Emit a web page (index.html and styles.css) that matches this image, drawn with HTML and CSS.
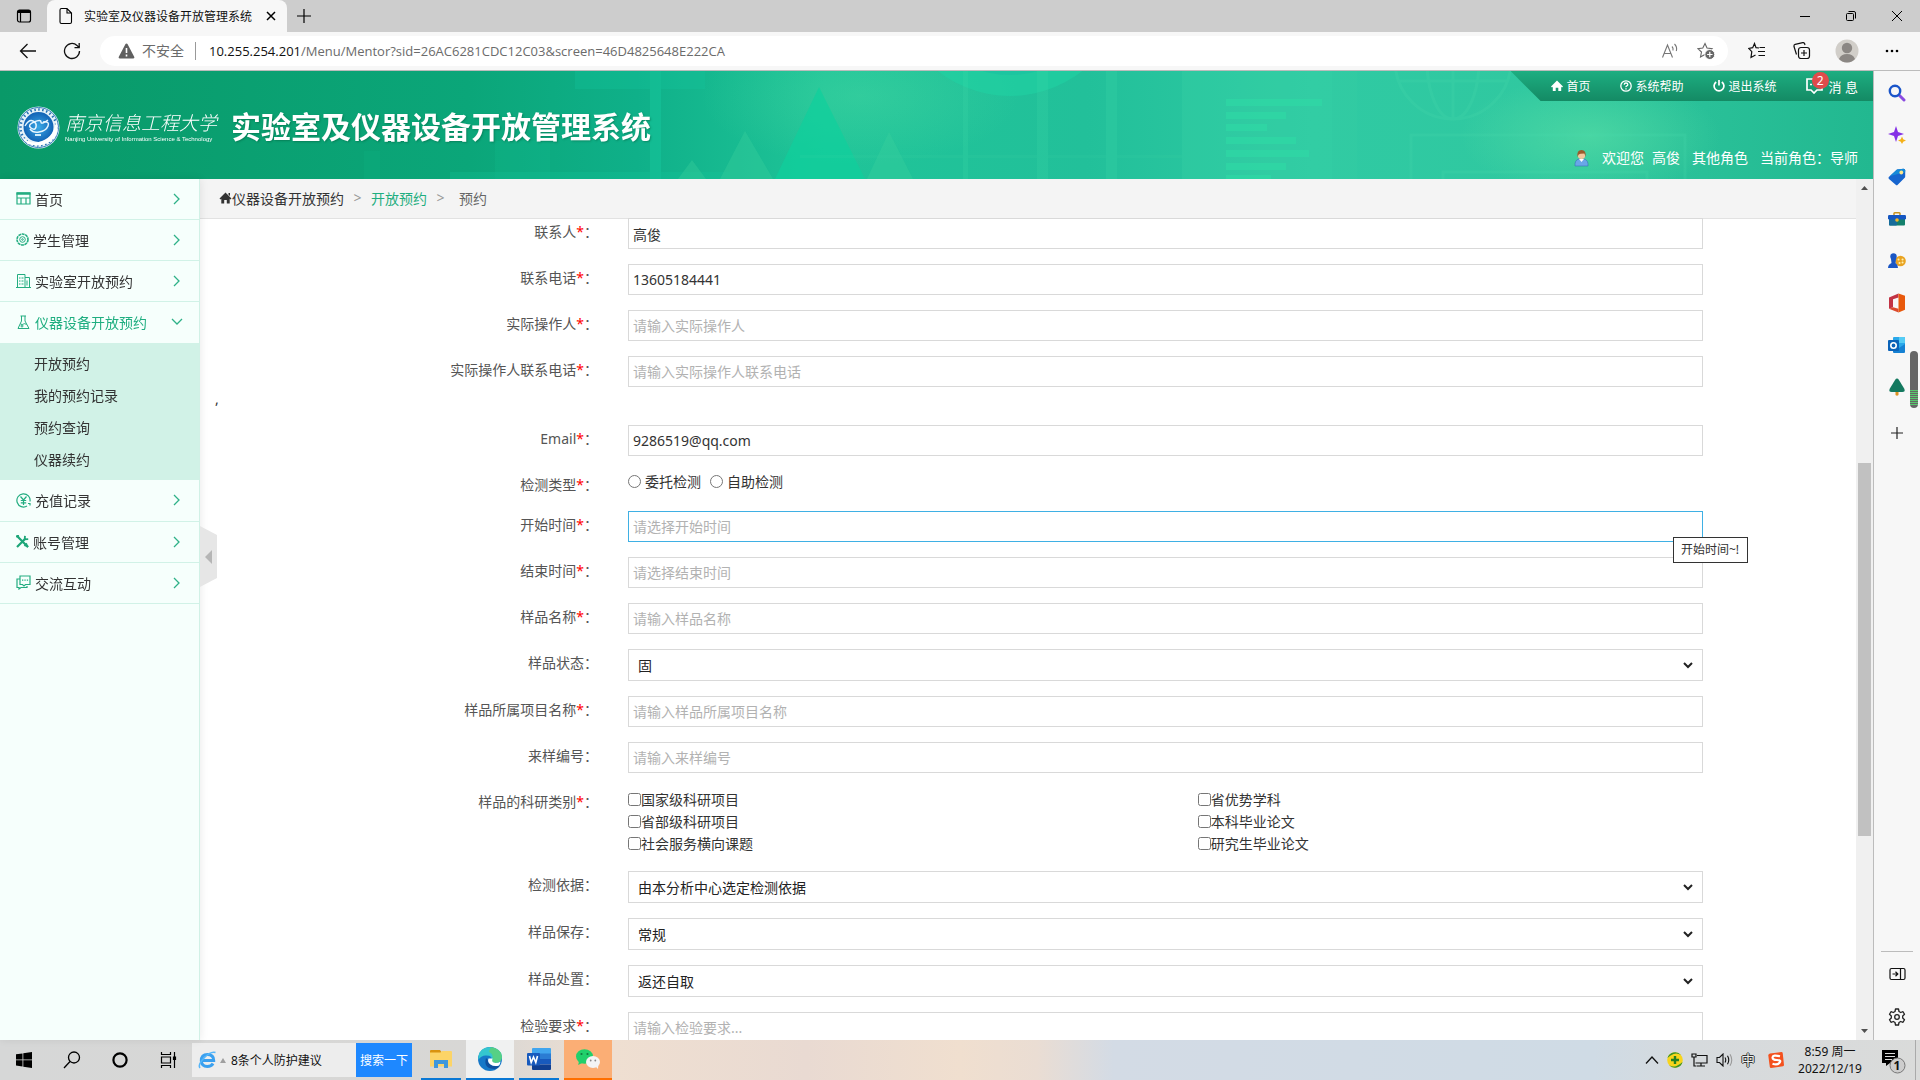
FILE: index.html
```
<!DOCTYPE html>
<html lang="zh-CN">
<head>
    <meta charset="UTF-8">
    <meta name="viewport" content="width=device-width, initial-scale=1.0">
    <title>实验室及仪器设备开放管理系统</title>
    <link rel="stylesheet" href="styles.css">
</head>
<body>
    <!-- Tabs -->
    <div class="tabs">
        <button class="tab-actions" aria-label="标签页操作">
            <svg width="16" height="16" viewBox="0 0 16 16"><rect x="1.5" y="2" width="13" height="12" rx="2" fill="none" stroke="#000" stroke-width="1.2"/><path d="M1.5 5V3.500q0-1.500 1.500-1.500h10q1.500 0 1.500 1.500V5z"/><path d="M4.500 5v9" stroke="#000" stroke-width="1.2"/></svg>
        </button>
        <div class="tab">
            <svg width="14" height="18" viewBox="0 0 14 18"><path d="M2.500 1.500h5.500l4.500 4.500v9q0 1.500-1.500 1.500h-8.500q-1.500 0-1.500-1.500v-12q0-1.500 1.500-1.500zM8 1.500v4.500h4.500" fill="none" stroke="#000" stroke-width="1.1"/></svg>
            <span class="tab-title">实验室及仪器设备开放管理系统</span>
            <button aria-label="关闭标签页"><svg width="10" height="10" viewBox="0 0 10 10"><path d="M1 1l8 8M9 1l-8 8" stroke="#000" stroke-width="1.5"/></svg></button>
        </div>
        <button class="new-tab" aria-label="新建标签页"><svg width="14" height="14" viewBox="0 0 14 14"><path d="M7 0v14M0 7h14" stroke="#000" stroke-width="1.2"/></svg></button>
        <div class="window-buttons">
            <button aria-label="最小化"><svg width="10" height="10" viewBox="0 0 10 10"><path d="M0 5.500h10" stroke="#000"/></svg></button>
            <button aria-label="还原"><svg width="10" height="10" viewBox="0 0 10 10"><rect x=".5" y="2.500" width="7" height="7" rx="1" fill="none" stroke="#000"/><path d="M2.500.5h5.500q1.500 0 1.500 1.500v5.500" fill="none" stroke="#000"/></svg></button>
            <button aria-label="关闭"><svg width="10" height="10" viewBox="0 0 10 10"><path d="M0 0l10 10M10 0L0 10" stroke="#000"/></svg></button>
        </div>
    </div>

    <!-- Toolbar -->
    <div class="toolbar">
        <button class="nav-button" aria-label="返回"><svg width="18" height="16" viewBox="0 0 18 16"><path d="M8.500 1L1.500 8l7 7M1.500 8h15.500" fill="none" stroke="#111" stroke-width="1.3"/></svg></button>
        <button class="nav-button" aria-label="刷新"><svg width="18" height="18" viewBox="0 0 18 18"><path d="M16.500 9a7.500 7.500 0 1 1-2.500-5.600L16 5.500M16.200 1v4.700h-4.700" fill="none" stroke="#111" stroke-width="1.3"/></svg></button>
        <div class="address">
            <svg width="17" height="16" viewBox="0 0 17 16"><path d="M8.500.5q.7 0 1 .6l6.800 13q.5 1.400-1 1.400H1.700q-1.500 0-1-1.400l6.800-13q.3-.6 1-.6z" fill="#5f5f5f"/><path d="M8.500 5v5M8.500 11.500v2" stroke="#fff" stroke-width="1.600"/></svg>
            <span class="insecure">不安全</span>
            <span class="url"><b>10.255.254.201</b>/Menu/Mentor?sid=26AC6281CDC12C03&amp;screen=46D4825648E222CA</span>
            <button aria-label="大声朗读"><svg width="18" height="16" viewBox="0 0 18 16" fill="none" stroke="#767676" stroke-width="1.1"><path d="M1.500 14.500L6.500 2l5 12.500M3.200 10.500h6.500M11 3.500q1.500 1.500 1 4M13.500 1q3 3 1.800 7"/></svg></button>
            <button aria-label="添加到收藏夹"><svg width="18" height="18" viewBox="0 0 18 18"><path d="M8 1.500l2 4.500 5 .6-3.700 3.400 1 5L8 12.500 3.500 15l1-5L.8 6.600l5-.6z" fill="none" stroke="#666" stroke-width="1.1"/><circle cx="12.800" cy="12.500" r="5" fill="#666" stroke="#fff"/><path d="M12.800 9.800v5.400M10.100 12.500h5.400" stroke="#fff" stroke-width="1.2"/></svg></button>
        </div>
        <button class="tool" aria-label="收藏夹"><svg width="18" height="18" viewBox="0 0 18 18"><path d="M11 6L8 5.700 6.500 1.500 4.700 5.700.8 6.500l3 3.200L3 15.500l4.500-2.500M11.500 5.500h5.500M10 9.500h7M10.500 13.500h6.500" fill="none" stroke="#111" stroke-width="1.200"/></svg></button>
        <button class="tool" aria-label="集锦"><svg width="18" height="18" viewBox="0 0 18 18" fill="none" stroke="#111" stroke-width="1.2"><rect x="5.500" y="5.500" width="11" height="11" rx="2.500"/><path d="M11 8v6M8 11h6M3.500 12.500L1 4.500q-.3-1.700 1.200-2.200l7.500-1.700q1.500-.2 2 1.200l.3 1.200"/></svg></button>
        <button class="tool" aria-label="个人资料"><svg width="24" height="24" viewBox="0 0 24 24"><circle cx="12" cy="12" r="11.500" fill="#d1cec9"/><circle cx="12" cy="9" r="5.200" fill="#8b8784"/><path d="M4 20q2-5 8-5t8 5q-3.500 3.500-8 3.500T4 20z" fill="#8b8784"/></svg></button>
        <button class="tool" aria-label="设置及其他"><svg width="14" height="4" viewBox="0 0 14 4"><circle cx="2" cy="2" r="1.300"/><circle cx="7" cy="2" r="1.300"/><circle cx="12" cy="2" r="1.300"/></svg></button>
    </div>

    <div class="window">
        <div class="page">
            <header class="header">
                <svg class="header-art" viewBox="0 0 1873 108" preserveAspectRatio="none">
                    <defs>
                        <radialGradient id="glow"><stop offset="0" stop-color="#5be0a6" stop-opacity=".6"/><stop offset="1" stop-color="#5be0a6" stop-opacity="0"/></radialGradient>
                    </defs>
                    <ellipse cx="1590" cy="65" rx="130" ry="60" fill="url(#glow)"/>
                    <ellipse cx="860" cy="25" rx="160" ry="70" fill="url(#glow)" opacity=".5"/>
                    <g fill="#16c79d" opacity=".5">
                        <rect x="575" y="0" width="130" height="18" opacity=".6"/>
                        <rect x="650" y="0" width="11" height="108"/>
                        <rect x="495" y="70" width="55" height="38" opacity=".3"/>
                        <rect x="450" y="101" width="280" height="7" opacity=".5"/>
                        <rect x="364" y="80" width="16" height="28" opacity=".2"/>
                    </g>
                    <path d="M678 108l14-19 14 19zM720 108l25-48 28 48zM867 108l22-47 24 47z" fill="#3bd29e" opacity=".35"/>
                    <path d="M775 108l44-92 46 92z" fill="#0ed09c" opacity=".7"/>
                    <circle cx="1010" cy="-92" r="117" fill="#1fd2a3" opacity=".6"/>
                    <circle cx="1010" cy="-92" r="96" fill="#1bc2a0" opacity=".6"/>
                    <g fill="#43dca9" opacity=".2">
                        <rect x="963" y="0" width="5" height="108"/>
                        <rect x="1037" y="0" width="11" height="108"/>
                        <rect x="1106" y="0" width="11" height="108"/>
                        <rect x="1182" y="0" width="150" height="108"/>
                        <rect x="1253" y="0" width="8" height="108"/>
                        <rect x="1332" y="0" width="25" height="108" opacity=".6"/>
                        <rect x="800" y="84" width="430" height="3" opacity=".6"/>
                    </g>
                    <g fill="#2fdda5" opacity=".5">
                        <rect x="1226" y="28" width="96" height="7"/>
                        <rect x="1226" y="41" width="60" height="7"/>
                        <rect x="1226" y="53" width="41" height="7"/>
                        <rect x="1226" y="66" width="70" height="7"/>
                        <rect x="1226" y="79" width="83" height="7"/>
                        <rect x="1226" y="92" width="60" height="7"/>
                        <rect x="1226" y="104" width="45" height="4"/>
                    </g>
                    <g fill="none" stroke="#4bdcae" stroke-width="3" opacity=".2">
                        <circle cx="1453" cy="-10" r="58"/>
                        <ellipse cx="1453" cy="-10" rx="26" ry="58"/>
                        <path d="M1453 0v48M1398 10h110M1411 108V64h274v44M1443 108v-7h204v7"/>
                    </g>
                </svg>
                <div class="brand">
                    <svg width="43" height="43" viewBox="0 0 43 43">
                        <defs><radialGradient id="globe"><stop offset="0" stop-color="#3aa9e6"/><stop offset="1" stop-color="#1263b5"/></radialGradient></defs>
                        <circle cx="21.500" cy="21.500" r="21" fill="#e6f2f8"/>
                        <circle cx="21.500" cy="21.500" r="18" fill="none" stroke="#2572b3" stroke-width="2.500" stroke-dasharray="1.500 2.500"/>
                        <circle cx="21.500" cy="21.500" r="20" fill="none" stroke="#3d81bb"/>
                        <circle cx="21.500" cy="21" r="15" fill="url(#globe)"/>
                        <path d="M4 29q8 11 21 6t14-21q5 14-5 21T11 38q-5-4-7-9z" fill="#fff"/>
                        <path d="M8 20q4-7 8-5t3 6-5 1 3-6 7 0 7-2M26 16q7-1 5 4t-9 6q-6 1-9-3" fill="none" stroke="#e7f6ff" stroke-width="1.500"/>
                        <path d="M18 29h6" stroke="#cfeaf8" stroke-width="2"/>
                    </svg>
                    <div class="school">
                        <span class="school-name">南京信息工程大学</span>
                        <span class="school-en">Nanjing University of Information Science &amp; Technology</span>
                    </div>
                    <h1>实验室及仪器设备开放管理系统</h1>
                </div>
                <div class="header-right">
                    <nav class="top-links">
                        <a href="#"><svg width="12" height="12" viewBox="0 0 12 12" fill="#fff"><path d="M6 .5l6 6-1 .9-.8-.7V11H7.300V7.800H4.700V11H1.800V6.700l-.8.7-1-.9z"/></svg>首页</a>
                        <a href="#"><svg width="12" height="12" viewBox="0 0 12 12" fill="none" stroke="#fff"><circle cx="6" cy="6" r="5.200" stroke-width="1.300"/><path d="M4.200 4.700q.1-1.700 1.800-1.700t1.800 1.500q0 .9-1 1.300t-.8 1.400M6 8.200v1.300" stroke-width="1.300"/></svg>系统帮助</a>
                        <a href="#"><svg width="12" height="12" viewBox="0 0 12 12" fill="none" stroke="#fff" stroke-width="1.700"><path d="M3.200 2a4.900 4.900 0 1 0 5.600 0M6 0v5.500"/></svg>退出系统</a>
                        <a href="#" class="message"><svg width="17" height="16" viewBox="0 0 17 16" fill="none" stroke="#fff" stroke-width="1.700"><path d="M12 1H1v11h4l3 3 3-3h5V8"/><path d="M4 6.500h2M7.500 6.500h2"/></svg><span class="badge">2</span>消 息</a>
                    </nav>
                    <div class="user">
                        <svg width="15" height="17" viewBox="0 0 15 17"><path d="M1 16q-.5-6 4-7h5q4.500 1 4 7z" fill="#69a6e8" stroke="#3571b8" stroke-width=".6"/><path d="M5 9l2.500 3L10 9z" fill="#fff"/><circle cx="7.500" cy="5.500" r="3.600" fill="#f6c79d"/><path d="M3.500 7Q2.500 0 7.500 0T11.500 7l-1-3.500-4 .3-1.800.7z" fill="#9a5b2c"/></svg>
                        <span>欢迎您</span>
                        <span>高俊</span>
                        <a href="#">其他角色</a>
                        <span>当前角色：导师</span>
                    </div>
                </div>
            </header>

            <div class="body">
                <nav class="menu">
                    <a href="#" class="menu-item"><svg width="15" height="15" viewBox="0 0 15 15" fill="none" stroke="#23ad80" stroke-width="1.200"><path d="M1 2h13v11H1zM1 7h13M5 7v6M10 7v6"/><path d="M.5 2.500h14" stroke-width="2.500"/></svg><span>首页</span><svg class="chevron" width="8" height="12" viewBox="0 0 8 12"><path d="M1 1l5 5-5 5"/></svg></a>
                    <a href="#" class="menu-item"><svg width="13" height="13" viewBox="0 0 13 13" fill="none" stroke="#23ad80"><circle cx="6.500" cy="6.500" r="5.500" stroke-width="1.600" stroke-dasharray="2.900 .6"/><circle cx="6.500" cy="6.500" r="2.800"/><circle cx="6.500" cy="6.500" r=".8"/></svg><span>学生管理</span><svg class="chevron" width="8" height="12" viewBox="0 0 8 12"><path d="M1 1l5 5-5 5"/></svg></a>
                    <a href="#" class="menu-item"><svg width="15" height="15" viewBox="0 0 15 15" fill="none" stroke="#23ad80"><path d="M1.500 14V1.500h7.500V14M9 4.500h4.500V14M0 14.500h15M3 5h1.500M5.500 5h2M3 8h1.500M5.500 8h2M3 11h1.500M5.500 11h2M11 7.500v5"/></svg><span>实验室开放预约</span><svg class="chevron" width="8" height="12" viewBox="0 0 8 12"><path d="M1 1l5 5-5 5"/></svg></a>
                    <a href="#" class="menu-item active"><svg width="15" height="15" viewBox="0 0 15 15" fill="none" stroke="#23ad80"><path d="M4.500 1h5.500M5.500 1v5L2 13.500h11L9 6V1M4.500 9q2 1 3 0t3 .5"/><circle cx="6" cy="11" r="1"/></svg><span>仪器设备开放预约</span><svg class="chevron" width="12" height="8" viewBox="0 0 12 8"><path d="M1 1l5 5 5-5"/></svg></a>
                    <div class="submenu">
                        <a href="#">开放预约</a>
                        <a href="#">我的预约记录</a>
                        <a href="#">预约查询</a>
                        <a href="#">仪器续约</a>
                    </div>
                    <a href="#" class="menu-item"><svg width="15" height="15" viewBox="0 0 15 15" fill="none" stroke="#23ad80" stroke-width="1.200"><path d="M14 8.500A6.600 6.600 0 1 0 11 13M4.500 3.500L7.500 7l3-3.500M7.500 7v5M4.800 7.500h5.400M4.800 9.800h5.400M12 10.500h2v2"/></svg><span>充值记录</span><svg class="chevron" width="8" height="12" viewBox="0 0 8 12"><path d="M1 1l5 5-5 5"/></svg></a>
                    <a href="#" class="menu-item"><svg width="13" height="13" viewBox="0 0 13 13" fill="none" stroke="#1da678" stroke-width="2.200"><path d="M1 1l11 11M1 12l8.500-8.500"/><path d="M9 .8L8.700 4.300l3.500-.2M9.500 9.500l2.500 2.500" stroke-width="1.800"/><path d="M0 1.500l3-1M8.500 11l2.500-2.500" stroke-width="2"/></svg><span>账号管理</span><svg class="chevron" width="8" height="12" viewBox="0 0 8 12"><path d="M1 1l5 5-5 5"/></svg></a>
                    <a href="#" class="menu-item"><svg width="15" height="15" viewBox="0 0 15 15" fill="none" stroke="#23ad80" stroke-width="1.200"><path d="M4 1h10v8.500H9.500L8 11 6.500 9.500H4zM4 4H1v8.500h2V14l2-1.500h6V11"/><path d="M6 5.200h1.300M8.400 5.200h1.300M10.800 5.200h1.300"/></svg><span>交流互动</span><svg class="chevron" width="8" height="12" viewBox="0 0 8 12"><path d="M1 1l5 5-5 5"/></svg></a>
                    <button class="collapse" aria-label="收起菜单"><svg width="7" height="14" viewBox="0 0 7 14"><path d="M7 0v14L0 7z" fill="#b5b5b5"/></svg></button>
                </nav>

                <main class="main">
                    <div class="breadcrumb">
                        <a href="#"><svg width="13" height="12" viewBox="0 0 12 12" fill="#333"><path d="M6 .5l6 6-1 .9-.8-.7V11.500H7.300V8H4.700v3.500H1.800V6.700l-.8.7-1-.9zM9 1h1.500v3L9 2.700z"/></svg>仪器设备开放预约</a>
                        <i>&gt;</i>
                        <a href="#" class="current">开放预约</a>
                        <i>&gt;</i>
                        <span>预约</span>
                    </div>

                    <form class="form">
                        <div class="row">
                            <label for="contact">联系人<em>*</em>：</label>
                            <input type="text" id="contact" value="高俊">
                        </div>
                        <div class="row">
                            <label for="phone">联系电话<em>*</em>：</label>
                            <input type="text" id="phone" value="13605184441">
                        </div>
                        <div class="row">
                            <label for="operator">实际操作人<em>*</em>：</label>
                            <input type="text" id="operator" placeholder="请输入实际操作人">
                        </div>
                        <div class="row last">
                            <label for="operatorPhone">实际操作人联系电话<em>*</em>：</label>
                            <input type="text" id="operatorPhone" placeholder="请输入实际操作人联系电话">
                        </div>
                        <div class="stray">,</div>
                        <div class="row">
                            <label for="email">Email<em>*</em>：</label>
                            <input type="text" id="email" value="9286519@qq.com">
                        </div>
                        <div class="row kind">
                            <span class="label">检测类型<em>*</em>：</span>
                            <div class="radios">
                                <input type="radio" name="kind" id="kind1"><label for="kind1">委托检测</label>
                                <input type="radio" name="kind" id="kind2"><label for="kind2">自助检测</label>
                            </div>
                        </div>
                        <div class="row">
                            <label for="start">开始时间<em>*</em>：</label>
                            <input type="text" id="start" class="focused" placeholder="请选择开始时间">
                            <div class="tooltip">开始时间~!</div>
                        </div>
                        <div class="row">
                            <label for="end">结束时间<em>*</em>：</label>
                            <input type="text" id="end" placeholder="请选择结束时间">
                        </div>
                        <div class="row">
                            <label for="sample">样品名称<em>*</em>：</label>
                            <input type="text" id="sample" placeholder="请输入样品名称">
                        </div>
                        <div class="row">
                            <label for="state">样品状态：</label>
                            <select id="state"><option>固</option></select>
                        </div>
                        <div class="row">
                            <label for="project">样品所属项目名称<em>*</em>：</label>
                            <input type="text" id="project" placeholder="请输入样品所属项目名称">
                        </div>
                        <div class="row">
                            <label for="number">来样编号：</label>
                            <input type="text" id="number" placeholder="请输入来样编号">
                        </div>
                        <div class="row">
                            <span class="label">样品的科研类别<em>*</em>：</span>
                            <div class="checks">
                                <div><input type="checkbox" id="c1"><label for="c1">国家级科研项目</label></div>
                                <div><input type="checkbox" id="c2"><label for="c2">省优势学科</label></div>
                                <div><input type="checkbox" id="c3"><label for="c3">省部级科研项目</label></div>
                                <div><input type="checkbox" id="c4"><label for="c4">本科毕业论文</label></div>
                                <div><input type="checkbox" id="c5"><label for="c5">社会服务横向课题</label></div>
                                <div><input type="checkbox" id="c6"><label for="c6">研究生毕业论文</label></div>
                            </div>
                        </div>
                        <div class="row">
                            <label for="basis">检测依据：</label>
                            <select id="basis"><option>由本分析中心选定检测依据</option></select>
                        </div>
                        <div class="row">
                            <label for="storage">样品保存：</label>
                            <select id="storage"><option>常规</option></select>
                        </div>
                        <div class="row">
                            <label for="disposal">样品处置：</label>
                            <select id="disposal"><option>返还自取</option></select>
                        </div>
                        <div class="row">
                            <label for="request">检验要求<em>*</em>：</label>
                            <textarea id="request" rows="4" placeholder="请输入检验要求..."></textarea>
                        </div>
                    </form>
                </main>

                <div class="scrollbar">
                    <svg width="7" height="4" viewBox="0 0 7 4"><path d="M0 4l3.500-4L7 4z" fill="#505050"/></svg>
                    <div class="track"><div class="thumb"></div></div>
                    <svg width="7" height="4" viewBox="0 0 7 4"><path d="M0 0l3.500 4L7 0z" fill="#505050"/></svg>
                </div>
            </div>
        </div>

        <!-- Edge side bar -->
        <aside class="edge">
            <button aria-label="搜索"><svg width="18" height="18" viewBox="0 0 18 18" fill="none"><path d="M11 11l5 5" stroke="#8a4be0" stroke-width="3" stroke-linecap="round"/><circle cx="7" cy="7" r="5.200" stroke="#1a55c9" stroke-width="2.400"/></svg></button>
            <button aria-label="发现"><svg width="18" height="18" viewBox="0 0 18 18"><path d="M8 0l2 6 6 2-6 2-2 6-2-6-6-2 6-2z" fill="#8430e6"/><path d="M14 10.500l1.200 2.800L18 14.500l-2.800 1.200L14 18l-1.200-2.300L10 14.500l2.800-1.200z" fill="#f5b117"/></svg></button>
            <button aria-label="购物"><svg width="18" height="18" viewBox="0 0 18 18"><path d="M9 1.500l6.500-.8q1.700 0 1.700 1.600v6.200q0 .7-.5 1.200l-7 7q-1 1-2 0L1 11q-1-1-.2-2z" fill="#1765ce"/><path d="M9 1.500l6.500-.8q1.700 0 1.700 1.600v2L2 8z" fill="#1689d8"/><circle cx="13.300" cy="4.500" r="1.900" fill="#fde68a"/></svg></button>
            <button aria-label="工具"><svg width="18" height="18" viewBox="0 0 18 18"><path d="M6 6V3.500q0-.8.8-.8h4.400q.8 0 .8.800V6" fill="none" stroke="#c79220" stroke-width="1.500"/><rect x="1" y="8" width="16" height="7.500" rx="1" fill="#14806c"/><rect x="1" y="8" width="8" height="7.500" rx="1" fill="#176c9b"/><rect x="0" y="5" width="18" height="4.500" rx="1.200" fill="#1556c2"/><circle cx="9" cy="10" r="1.800" fill="#f5b829"/></svg></button>
            <button aria-label="游戏"><svg width="18" height="18" viewBox="0 0 18 18"><circle cx="12.500" cy="9" r="5.300" fill="#e9a322"/><path d="M10.500 7.500h.1M14.500 7.500h.1M11.500 11h.1M14.500 10.500h.1" stroke="#fff1b0" stroke-width="2" stroke-linecap="round"/><circle cx="5.500" cy="4.500" r="3.200" fill="#1a56c4"/><path d="M3 7h5l-.5 4q2.500 1.500 2.500 5H0q0-3.500 3.500-5z" fill="#1a56c4"/></svg></button>
            <button aria-label="Office"><svg width="18" height="20" viewBox="0 0 18 20"><path d="M1 4.500L10.500.5v4L5 6.200v8l-4 1.600z" fill="#c23344"/><path d="M10.500.5L17 2.800v14L10.500 19.500V.5z" fill="#e8590c"/><path d="M1 15.800l4-1.600 5.500 1.500v3.800z" fill="#dc4a2e"/></svg></button>
            <button aria-label="Outlook"><svg width="18" height="18" viewBox="0 0 18 18"><rect x="5" y="1" width="12" height="14" rx="1" fill="#2aa8ea"/><path d="M11 1h5q1 0 1 1v5h-6z" fill="#55ccf5"/><path d="M5 9l6 3 6-4v8q0 1-1 1H6q-1 0-1-1z" fill="#1581d3"/><rect x="0" y="4" width="11" height="11" rx="1" fill="#0b63b8"/><circle cx="5.500" cy="9.500" r="2.700" fill="none" stroke="#fff" stroke-width="1.600"/></svg></button>
            <button aria-label="Tree"><svg width="18" height="18" viewBox="0 0 18 18"><path d="M7.500 13h3v4q-1.500 1.500-3 0z" fill="#dc9223"/><path d="M9 .5q1 0 1.800 1.200l5.500 9q1.400 3.300-2 3.300H3.700q-3.400 0-2-3.300l5.500-9Q8 .5 9 .5z" fill="#14795f"/></svg></button>
            <button class="edge-add" aria-label="添加"><svg width="14" height="14" viewBox="0 0 14 14"><path d="M7 1v12M1 7h12" stroke="#222" stroke-width="1.200"/></svg></button>
            <div class="edge-bottom">
                <button aria-label="隐藏侧栏"><svg width="17" height="14" viewBox="0 0 17 14" fill="none" stroke="#111" stroke-width="1.200"><rect x="1" y="1.500" width="15" height="11" rx="1.500"/><path d="M11.500 1.500v11M3.500 7h5M6.500 4.800L8.800 7 6.500 9.200"/></svg></button>
                <button aria-label="设置"><svg width="18" height="18" viewBox="0 0 18 18" fill="none" stroke="#222" stroke-width="1.300"><circle cx="9" cy="9" r="2.300"/><path d="M7.500 1h3l.5 2.500 1.700 1 2.300-.8 1.500 2.600L14.700 8v2l1.800 1.700-1.500 2.600-2.300-.8-1.700 1-.5 2.500h-3L7 14.500l-1.700-1-2.300.8-1.500-2.600L3.300 10V8L1.500 6.300 3 3.700l2.300.8L7 3.500z" stroke-linejoin="round"/></svg></button>
            </div>
            <div class="meter"></div>
        </aside>
    </div>

    <!-- Windows task bar -->
    <footer class="taskbar">
        <button class="task" aria-label="开始"><svg width="16" height="16" viewBox="0 0 16 16"><path d="M0 2.300l6.500-.9v6.100H0zM7.300 1.300L16 0v7.500H7.300zM0 8.300h6.500v6.200L0 13.600zM7.300 8.300H16V16l-8.700-1.300z"/></svg></button>
        <button class="task" aria-label="搜索"><svg width="18" height="18" viewBox="0 0 18 18" fill="none" stroke="#000" stroke-width="1.300"><circle cx="11" cy="6.500" r="5.500"/><path d="M7 10.500L1 17"/></svg></button>
        <button class="task" aria-label="Cortana"><svg width="16" height="16" viewBox="0 0 16 16"><circle cx="8" cy="8" r="6.600" fill="none" stroke="#000" stroke-width="2.200"/></svg></button>
        <button class="task" aria-label="任务视图"><svg width="17" height="16" viewBox="0 0 17 16" fill="none" stroke="#000" stroke-width="1.200"><path d="M1.500 0v2.500h9V0M1.500 16v-2.500h9V16M1.500 5h9v6h-9zM14.500 0v16"/><path d="M13.500 5h2v2.500h-2z" fill="#000"/></svg></button>
        <div class="deskband">
            <svg width="18" height="20" viewBox="0 0 18 20" fill="none"><path d="M3.500 10.500h12.200q0-6-6.200-6t-6.200 6.500q.4 5.500 6 5.500 4 0 5.700-3" stroke="#3aa0ef" stroke-width="3"/><path d="M2 18q-2.500-3 4-10T17.500 2.500" stroke="#55b5f8" stroke-width="1.600"/></svg>
            <svg width="6" height="5" viewBox="0 0 6 5"><path d="M0 5l3-5 3 5z" fill="#a0a0a0"/></svg>
            <span>8条个人防护建议</span>
            <button>搜索一下</button>
        </div>
        <button class="app explorer" aria-label="文件资源管理器"><svg width="22" height="20" viewBox="0 0 22 20"><path d="M0 2q0-1 1-1h9l2 3H0z" fill="#d9930f"/><path d="M0 3.500h10.500L12 2h9q1 0 1 1v14.500H0z" fill="#fcd467"/><path d="M4 19v-8h14v8h-4v-4H8v4z" fill="#3f97dc"/></svg></button>
        <button class="app browser" aria-label="Microsoft Edge"><svg width="24" height="24" viewBox="0 0 24 24"><circle cx="12" cy="12" r="12" fill="#1678c8"/><path d="M.3 10Q2 0 12 0q11 1 12 9.500 0 6-6.500 6.500-4 0-3.700-2.500.7-5-5.300-5Q3 8.200.3 13z" fill="#34c6cf"/><path d="M13 0q10 1.500 11 9.500 0 6-6.500 6.500-4 0-3.700-2.500 3-5-3-9z" fill="#61d36c" opacity=".75"/><path d="M8 11q-3 11 9 11 3-.5 5-3.500-4 1.500-8 0T9.500 12.500z" fill="#0f509e"/><path d="M14.500 11.500q-1.500 4 3 4.500 3 0 5-1.500-.5 3-1.500 4-5 1.500-8.500-1t-2-6z" fill="#fff"/></svg></button>
        <button class="app word" aria-label="Word"><svg width="24" height="22" viewBox="0 0 24 22"><path d="M5 1q0-1 1-1h17q1 0 1 1v5H5z" fill="#41a5ee"/><path d="M5 5.500h19V11H5z" fill="#2b7cd3"/><path d="M5 11h19v5.500H5z" fill="#185abd"/><path d="M5 16.500h19V21q0 1-1 1H6q-1 0-1-1z" fill="#103f91"/><rect x="0" y="5" width="13" height="12.500" rx="1" fill="#185abd"/><path d="M2.500 8l1.700 6.500L6.500 9l2.300 5.500L10.500 8" fill="none" stroke="#fff" stroke-width="1.600"/></svg></button>
        <button class="app wechat" aria-label="微信"><svg width="24" height="20" viewBox="0 0 24 20"><ellipse cx="8.500" cy="7.500" rx="8.500" ry="7.300" fill="#21d06b"/><path d="M3 12l-.8 4L7 13.500z" fill="#21d06b"/><circle cx="5.500" cy="5" r="1.100" fill="#137a40"/><circle cx="11.500" cy="5" r="1.100" fill="#137a40"/><ellipse cx="17" cy="13" rx="7" ry="6" fill="#f4f4f4"/><path d="M20 18l2 2 .3-4z" fill="#f4f4f4"/><circle cx="14.700" cy="11.500" r=".9" fill="#888"/><circle cx="19.300" cy="11.500" r=".9" fill="#888"/></svg></button>
        <div class="tray">
            <svg width="14" height="8" viewBox="0 0 14 8"><path d="M1 7.500L7 1l6 6.500" fill="none" stroke="#111" stroke-width="1.300"/></svg>
            <svg width="16" height="16" viewBox="0 0 16 16"><circle cx="8" cy="8" r="7.800" fill="#f8d51c"/><path d="M.5 6A7.800 7.800 0 0 1 14 3q-4-2.500-7.500-1T.5 6zM15.500 10A7.800 7.800 0 0 1 2 13q4 2.500 7.500 1t6-4z" fill="#38932c"/><path d="M8 4v8M4 8h8" stroke="#238021" stroke-width="2.400"/></svg>
            <svg width="17" height="14" viewBox="0 0 17 14" fill="none" stroke="#111" stroke-width="1.200"><path d="M6 2.500h10v7.500H4.500M10 10v2.500M6 13h8M1 1h4v3H1zM3 4v9h2.500"/></svg>
            <svg width="17" height="14" viewBox="0 0 17 14" fill="none" stroke="#111" stroke-width="1.100"><path d="M1 4.500h2.500L7 1v12L3.500 9.500H1zM9 4.500q1.500 2.500 0 5M11.500 2.800q2.500 4.200 0 8.400"/><path d="M14 1.200q3.500 5.800 0 11.600" stroke="#999"/></svg>
            <span class="ime">中</span>
            <svg class="sogou" width="16" height="16" viewBox="0 0 16 16"><path d="M2 1.500L13.500 0q1 0 1.200 1L16 13q0 1-1 1.200L3 16q-1 0-1.200-1L.3 3.500q-.1-1.500 1.700-2z" fill="#f4511e"/><path d="M12 4.200Q5 2.500 4.600 5.200T9 8t2.500 2.800-7 .9" fill="none" stroke="#fff" stroke-width="2.200"/></svg>
            <div class="clock"><span>8:59 周一</span><span>2022/12/19</span></div>
            <button class="notice" aria-label="通知"><svg width="24" height="24" viewBox="0 0 24 24"><path d="M0 0h16v13H8l-4 3v-3H0z"/><path d="M3 3.500h10M3 6.500h10M3 9.500h7" stroke="#ddd" stroke-width="1.100"/><circle cx="15.500" cy="15.500" r="7.500" fill="#cdcdcd" stroke="#777"/></svg><span>1</span></button>
        </div>
    </footer>
</body>
</html>
```
FILE: styles.css
```
/* Base */
* {
    box-sizing: border-box;
}

body {
    margin: 0;
    height: 100vh;
    display: flex;
    flex-direction: column;
    overflow: hidden;
    background: #fff;
    color: #333;
    font-family: "Noto Sans", "Noto Sans CJK SC", sans-serif;
    font-size: 14px;
}

a {
    color: inherit;
    text-decoration: none;
}

button {
    display: flex;
    align-items: center;
    justify-content: center;
    padding: 0;
    border: none;
    background: none;
    font-family: inherit;
    color: inherit;
}

svg {
    display: block;
    flex: none;
}

/* Tabs */
.tabs {
    display: flex;
    flex: none;
    height: 32px;
    background: #cdcdcd;
}

.tab-actions {
    width: 47px;
}

.tab {
    display: flex;
    align-items: center;
    width: 240px;
    padding: 0 11px 0 12px;
    background: #f7f7f7;
    border-radius: 8px 8px 0 0;
    color: #111;
    font-size: 12px;
}

.tab-title {
    flex: 1;
    padding-left: 11px;
}

.new-tab {
    width: 34px;
}

.window-buttons {
    display: flex;
    margin-left: auto;
}

.window-buttons button {
    width: 46px;
}

/* Toolbar */
.toolbar {
    display: flex;
    flex: none;
    align-items: center;
    height: 39px;
    padding: 0 16px 0 6px;
    background: #f7f7f7;
    border-bottom: 1px solid #bcbcbc;
}

.nav-button {
    width: 44px;
}

.address {
    display: flex;
    flex: 1;
    align-items: center;
    height: 30px;
    margin: 0 17px 0 6px;
    padding: 0 4px 0 18px;
    border-radius: 15px;
    background: #fff;
    color: #6b6b6b;
}

.address button {
    width: 36px;
}

.insecure {
    margin-left: 7px;
    padding-right: 11px;
    border-right: 1px solid #999;
    line-height: 18px;
}

.url {
    flex: 1;
    padding-left: 13px;
    font-family: "Open Sans", sans-serif;
    font-size: 13px;
}

.url b {
    color: #111;
    font-weight: normal;
}

.tool {
    width: 24px;
    margin-right: 21px;
}

.tool:last-child {
    margin-right: 0;
}

/* Window */
.window {
    display: flex;
    flex: 1;
    min-height: 0;
}

.page {
    display: flex;
    flex: 1;
    flex-direction: column;
    min-width: 0;
}

/* Header */
.header {
    position: relative;
    display: flex;
    flex: none;
    justify-content: space-between;
    height: 108px;
    overflow: hidden;
    background: linear-gradient(90deg, #099968 0%, #0ba679 25%, #0fb089 34%, #1fc498 44%, #22c09a 58%, #2fcaa3 70%, #30c8a0 82%, #22b890 100%);
    color: #fff;
}

.header-art {
    position: absolute;
    left: 0;
    top: 0;
    width: 100%;
    height: 100%;
}

.brand {
    position: relative;
    display: flex;
    align-items: center;
    padding: 4px 0 0 17px;
}

.school {
    display: flex;
    flex-direction: column;
    margin: 0 14px 0 5px;
    white-space: nowrap;
}

.school-name {
    font-size: 19px;
    font-style: italic;
    font-weight: 300;
    line-height: 24px;
}

.school-en {
    font-family: "Liberation Sans", sans-serif;
    font-size: 6px;
    line-height: 8px;
}

.brand h1 {
    margin: 0;
    font-size: 30px;
    font-weight: bold;
    line-height: 40px;
    text-shadow: 1px 1px 2px rgba(0, 80, 50, 0.4);
}

.header-right {
    position: relative;
    display: flex;
    flex-direction: column;
    align-items: flex-end;
    justify-content: space-between;
    padding-bottom: 11px;
}

.top-links {
    display: flex;
    align-items: center;
    height: 30px;
    padding: 0 15px 0 40px;
    gap: 29px;
    background: linear-gradient(#1dae81, #148a64);
    clip-path: polygon(0 0, 100% 0, 100% 100%, 30px 100%);
    font-size: 12px;
}

.top-links a {
    display: flex;
    align-items: center;
    gap: 4px;
}

.top-links .message {
    position: relative;
    gap: 6px;
    font-size: 13px;
}

.badge {
    position: absolute;
    left: 6px;
    top: -5px;
    width: 17px;
    height: 17px;
    border-radius: 50%;
    background: #e04b4b;
    font-size: 12px;
    line-height: 17px;
    text-align: center;
}

.user {
    display: flex;
    align-items: center;
    padding-right: 15px;
    line-height: 20px;
}

.user svg {
    margin-right: 13px;
}

.user span + span {
    margin-left: 8px;
}

.user a {
    margin: 0 12px;
}

/* Body */
.body {
    display: flex;
    flex: 1;
    min-height: 0;
}

/* Menu */
.menu {
    position: relative;
    z-index: 1;
    flex: none;
    width: 200px;
    background: #f6fffc;
    border-right: 1px solid #d1f1e6;
    box-shadow: 1px 0 8px rgba(0, 0, 0, 0.08);
}

.menu-item {
    display: flex;
    align-items: center;
    height: 41px;
    padding: 0 18px 1px 16px;
    border-bottom: 1px solid #d1f2e7;
}

.menu-item span {
    flex: 1;
    padding-left: 4px;
}

.menu-item.active {
    height: 42px;
    color: #1fae80;
}

.chevron {
    fill: none;
    stroke: #2eb188;
    stroke-width: 1.3;
}

.active .chevron {
    margin-right: -2px;
}

.submenu {
    padding: 4px 0;
    background: #d1f2e7;
}

.submenu a {
    display: block;
    padding-left: 34px;
    line-height: 32px;
}

.submenu + .menu-item {
    height: 42px;
}

.collapse {
    position: absolute;
    left: 200px;
    top: 347px;
    width: 17px;
    height: 61px;
    background: #e6e6e6;
    clip-path: polygon(0 0, 100% 9px, 100% 52px, 0 100%);
}

/* Breadcrumb */
.main {
    flex: 1;
    min-width: 0;
    overflow: hidden;
}

.breadcrumb {
    position: relative;
    display: flex;
    align-items: center;
    height: 40px;
    padding: 0 0 2px 19px;
    background: #f4f4f4;
    border-bottom: 1px solid #e2e2e2;
}

.breadcrumb a {
    display: flex;
    align-items: center;
}

.breadcrumb i {
    width: 27px;
    color: #999;
    font-style: normal;
    text-align: center;
}

.breadcrumb .current {
    color: #1fae80;
}

.breadcrumb span {
    padding-left: 5px;
    color: #666;
}

/* Form */
.form {
    margin-top: -1px;
    padding-right: 153px;
}

.row {
    position: relative;
    display: flex;
    align-items: flex-start;
    margin-bottom: 15px;
}

.row.last {
    margin-bottom: 0;
}

.row.kind {
    height: 25px;
}

.row > label,
.row > .label {
    flex: none;
    width: 428px;
    padding-right: 30px;
    line-height: 28px;
    text-align: right;
    color: #555;
    white-space: nowrap;
}

.row em {
    color: #f00;
    font-style: normal;
}

.row > input,
.row > select,
.row > textarea {
    flex: 1;
    min-width: 0;
    height: 31px;
    margin: 0;
    padding: 0 4px;
    border: 1px solid #d9d9d9;
    border-radius: 0;
    background: #fff;
    color: #333;
    font-family: inherit;
    font-size: 14px;
}

.row > select {
    appearance: none;
    height: 32px;
    padding: 0 30px 0 9px;
    background: #fff url("data:image/svg+xml,%3Csvg xmlns='http://www.w3.org/2000/svg' width='10' height='7' viewBox='0 0 10 7'%3E%3Cpath d='M1 1l4 4 4-4' fill='none' stroke='%23222' stroke-width='2'/%3E%3C/svg%3E") no-repeat right 9px center;
    color: #222;
}

.row > textarea {
    height: 90px;
    padding: 4px;
    resize: none;
}

.row > .focused {
    border-color: #3fb0e4;
}

::placeholder {
    color: #b2b2b2;
}

.stray {
    height: 38px;
    padding-left: 15px;
    line-height: 24px;
}

.radios {
    display: flex;
    align-items: center;
    flex: 1;
    height: 22px;
}

.radios input {
    margin: 0 4px 2px 0;
}

.radios label {
    margin-right: 9px;
    line-height: 22px;
}

.checks {
    display: grid;
    grid-template-columns: 53% 1fr;
    flex: 1;
    height: 68px;
    padding-bottom: 2px;
}

.checks div {
    display: flex;
    align-items: center;
}

.checks input {
    margin: 0;
}

.tooltip {
    position: absolute;
    z-index: 2;
    right: -45px;
    top: 26px;
    padding: 0 8px 0 7px;
    border: 1px solid #333;
    background: #fff;
    font-size: 12px;
    line-height: 24px;
}

/* Scrollbar */
.scrollbar {
    display: flex;
    flex: none;
    flex-direction: column;
    align-items: center;
    width: 17px;
    padding: 7px 0;
    background: #f0f0f0;
}

.track {
    flex: 1;
    width: 13px;
    padding: 273px 0 0;
}

.thumb {
    height: 46%;
    min-height: 373px;
    background: #c1c1c1;
}

/* Edge side bar */
.edge {
    position: relative;
    display: flex;
    flex: none;
    flex-direction: column;
    align-items: center;
    width: 47px;
    padding-top: 1px;
    background: #f7f7f7;
    border-left: 1px solid #bcbcbc;
}

.edge button {
    width: 32px;
    height: 42px;
}

.edge .edge-add {
    height: 50px;
}

.edge-bottom {
    margin-top: auto;
    padding-bottom: 2px;
    border-top: 1px solid #bcbcbc;
}

.edge-bottom button {
    height: 43px;
}

.meter {
    position: absolute;
    right: 2px;
    top: 280px;
    width: 8px;
    height: 57px;
    border-radius: 4px;
    background: linear-gradient(#666 38px, transparent 38px, transparent 55px, #666 55px), repeating-linear-gradient(#666 0 1px, #58c66e 1px 2px);
}

/* Task bar */
.taskbar {
    display: flex;
    flex: none;
    height: 40px;
    background: linear-gradient(90deg, #d6d7d7 0%, #d8d7d5 25%, #efdfd1 32%, #e9dad2 42%, #f0dfcf 50%, #eaddd3 54%, #d3dbe5 58%, #cfdbe5 83%, #d6dadd 88%, #dadbda 100%);
    color: #111;
}

.task {
    width: 48px;
}

.deskband {
    display: flex;
    align-items: center;
    width: 220px;
    height: 34px;
    margin: 3px 9px 0 0;
    padding-left: 6px;
    gap: 4px;
    background: #ededed;
    font-size: 12px;
}

.deskband span {
    flex: 1;
    padding-left: 1px;
    white-space: nowrap;
}

.deskband button {
    width: 56px;
    height: 34px;
    background: #1e88ff;
    color: #fff;
    font-size: 12px;
}

.app {
    width: 40px;
    margin-right: 5px;
    border-bottom: 2px solid #0a78d4;
}

.app.browser {
    width: 48px;
    background: #f0f1f1;
}

.app.wechat {
    width: 48px;
    background: #fbae75;
    border-bottom-color: #ff6f00;
}

.tray {
    display: flex;
    align-items: center;
    margin-left: auto;
    padding-right: 4px;
    gap: 8px;
}

.ime {
    width: 14px;
    color: #eee;
    line-height: 16px;
    text-shadow: 1px 0 #333, -1px 0 #333, 0 1px #333, 0 -1px #333;
}

.sogou {
    margin: 0 4px 0 5px;
}

.clock {
    display: flex;
    flex-direction: column;
    width: 68px;
    font-size: 12px;
    line-height: 17px;
    text-align: center;
}

.notice {
    position: relative;
    width: 44px;
    height: 40px;
    padding-top: 4px;
    border-right: 1px solid #aaa;
}

.notice span {
    position: absolute;
    left: 21px;
    top: 18px;
    width: 8px;
    font-size: 12px;
    line-height: 16px;
    font-weight: bold;
}
```
